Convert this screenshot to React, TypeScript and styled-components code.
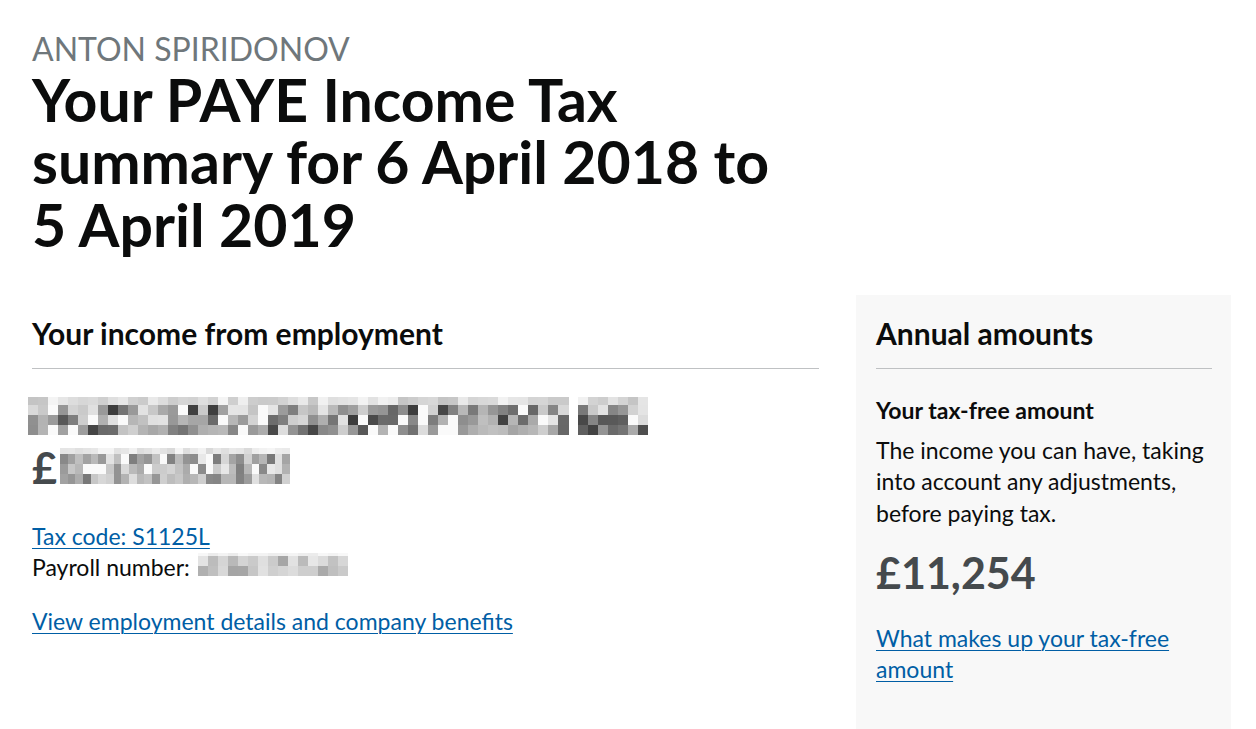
import React from "react";
import styled, { createGlobalStyle } from "styled-components";

const GlobalStyle = createGlobalStyle`
  html, body { margin: 0; padding: 0; background: #ffffff; }
  body {
    font-family: "Lato", "Roboto", "Liberation Sans", sans-serif;
    color: #0b0c0c;
    -webkit-font-smoothing: antialiased;
  }
`;

const Page = styled.main`
  padding: 31px 25px 0 32px;
  box-sizing: border-box;
  width: 1256px;
  min-height: 729px;
  overflow: hidden;
`;

const Header = styled.header`
  width: 775px;
`;

const Caption = styled.span`
  display: block;
  font-size: 32px;
  line-height: 36px;
  font-weight: 400;
  color: #6f777b;
`;

const Title = styled.h1`
  margin: 1.5px 0 0;
  font-size: 59px;
  line-height: 62.5px;
  font-weight: 700;
  color: #0b0c0c;
`;

const Columns = styled.div`
  display: flex;
  align-items: stretch;
  gap: 37px;
  margin-top: 38.5px;
`;

const Main = styled.section`
  width: 787px;
  padding-top: 20px;
  box-sizing: border-box;
`;

const Aside = styled.aside`
  width: 375px;
  background: #f8f8f8;
  padding: 20px 19px 60px 20px;
  box-sizing: border-box;
`;

const SectionHeading = styled.h2`
  margin: 0;
  font-size: 30px;
  line-height: 37.5px;
  font-weight: 700;
`;

const Rule = styled.hr`
  margin: 15.5px 0 0;
  border: 0;
  border-top: 1px solid #bfc1c3;
`;

const Redacted = styled.svg<{ $offset?: number }>`
  display: block;
  margin-left: ${(p) => p.$offset ?? 0}px;
`;

const EmployerName = styled.div`
  margin-top: 28px;
`;

const AmountLine = styled.div`
  display: flex;
  align-items: baseline;
  margin-top: 8.4px;
  font-size: 43px;
  line-height: 50px;
  font-weight: 700;
  color: #454a4d;
`;

const InlineRedacted = styled.svg<{ $gap: number }>`
  display: inline-block;
  vertical-align: baseline;
  margin-left: ${(p) => p.$gap}px;
`;

const Body = styled.p<{ $mt: number }>`
  margin: ${(p) => p.$mt}px 0 0;
  font-size: 23px;
  line-height: 31.25px;
  font-weight: 400;
`;

const Link = styled.a`
  color: #005ea5;
  text-decoration: underline;
  text-decoration-thickness: 1px;
  text-underline-offset: 3px;
  cursor: pointer;
`;

const SubHeading = styled.h3`
  margin: 26.5px 0 0;
  font-size: 23px;
  line-height: 31.25px;
  font-weight: 700;
`;

const BigAmount = styled.p`
  margin: 19px 0 0;
  font-size: 43px;
  line-height: 50px;
  font-weight: 700;
  color: #454a4d;
`;

function rng(seed: number) {
  let a = seed >>> 0;
  return () => {
    a = (a + 0x6d2b79f5) >>> 0;
    let t = a;
    t = Math.imul(t ^ (t >>> 15), t | 1);
    t ^= t + Math.imul(t ^ (t >>> 7), t | 61);
    return ((t ^ (t >>> 14)) >>> 0) / 4294967296;
  };
}

type MosaicSpec = {
  seed: number;
  cols: number;
  cellW: number;
  rows: number[];
  lightTop: [number, number];
  body: [number, number];
  blanks?: number[];
  whiteChance?: number;
};

function cells(spec: MosaicSpec) {
  const r = rng(spec.seed);
  const out: { x: number; y: number; w: number; h: number; c: string }[] = [];
  let y = 0;
  spec.rows.forEach((h, ri) => {
    for (let i = 0; i < spec.cols; i++) {
      if (spec.blanks && spec.blanks.includes(i)) continue;
      const [lo, hi] = ri === 0 ? spec.lightTop : spec.body;
      let v = Math.round(lo + r() * (hi - lo));
      if (ri > 0 && spec.whiteChance && r() < spec.whiteChance) v = 250;
      const c = `rgb(${v},${v},${v})`;
      out.push({ x: i * spec.cellW, y, w: spec.cellW + 0.5, h, c });
    }
    y += h;
  });
  return { out, width: spec.cols * spec.cellW, height: y };
}

const nameSpec: MosaicSpec = {
  seed: 7,
  cols: 62,
  cellW: 10,
  rows: [8, 10, 10, 10],
  lightTop: [195, 245],
  body: [60, 230],
  blanks: [54],
  whiteChance: 0.14,
};

const amountSpec: MosaicSpec = {
  seed: 21,
  cols: 30,
  cellW: 7.67,
  rows: [6, 10, 10, 10],
  lightTop: [215, 248],
  body: [115, 235],
  whiteChance: 0.08,
};

const payrollSpec: MosaicSpec = {
  seed: 3,
  cols: 15,
  cellW: 10,
  rows: [3, 10, 10],
  lightTop: [235, 252],
  body: [165, 235],
};

function Mosaic({ spec, inline, gap = 0, offset = 0 }: { spec: MosaicSpec; inline?: boolean; gap?: number; offset?: number }) {
  const { out, width, height } = cells(spec);
  const content = out.map((c, i) => (
    <rect key={i} x={c.x} y={c.y} width={c.w} height={c.h} fill={c.c} />
  ));
  if (inline) {
    return (
      <InlineRedacted $gap={gap} width={width} height={height} viewBox={`0 0 ${width} ${height}`} shapeRendering="crispEdges" aria-hidden>
        {content}
      </InlineRedacted>
    );
  }
  return (
    <Redacted $offset={offset} width={width} height={height} viewBox={`0 0 ${width} ${height}`} shapeRendering="crispEdges" aria-hidden>
      {content}
    </Redacted>
  );
}

export default function App() {
  return (
    <>
      <GlobalStyle />
      <Page>
        <Header>
          <Caption>ANTON SPIRIDONOV</Caption>
          <Title>Your PAYE Income Tax summary for 6 April 2018 to 5 April 2019</Title>
        </Header>
        <Columns>
          <Main>
            <SectionHeading>Your income from employment</SectionHeading>
            <Rule />
            <EmployerName>
              <Mosaic spec={nameSpec} offset={-4} />
            </EmployerName>
            <AmountLine>
              <span>£</span>
              <Mosaic spec={amountSpec} inline gap={3} />
            </AmountLine>
            <Body $mt={28}>
              <Link>Tax code: S1125L</Link>
              <br />
              Payroll number:
              <Mosaic spec={payrollSpec} inline gap={8} />
            </Body>
            <Body $mt={23}>
              <Link>View employment details and company benefits</Link>
            </Body>
          </Main>
          <Aside>
            <SectionHeading>Annual amounts</SectionHeading>
            <Rule />
            <SubHeading>Your tax-free amount</SubHeading>
            <Body $mt={8.75}>The income you can have, taking into account any adjustments, before paying tax.</Body>
            <BigAmount>£11,254</BigAmount>
            <Body $mt={25}>
              <Link>What makes up your tax-free amount</Link>
            </Body>
          </Aside>
        </Columns>
      </Page>
    </>
  );
}
